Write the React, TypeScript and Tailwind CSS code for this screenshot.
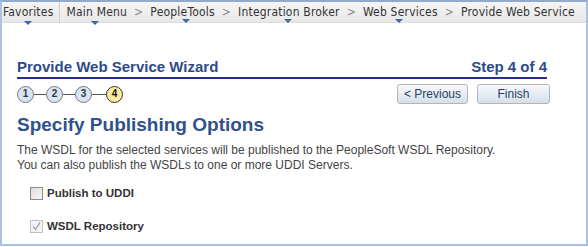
import React from "react";

function Crumb({ label, tri, triLeft }: { label: string; tri?: boolean; triLeft?: string }) {
  return (
    <span className="relative">
      {label}
      {tri && (
        <span
          className={`absolute top-[16px] w-0 h-0 border-l-[4px] border-r-[4px] border-t-[4px] border-l-transparent border-r-transparent border-t-[#3a67b0] ${triLeft ?? "left-1/2 -translate-x-1/2"}`}
        />
      )}
    </span>
  );
}

function Step({ n, active }: { n: number; active?: boolean }) {
  return (
    <div
      className={`w-[17px] h-[17px] rounded-full flex items-center justify-center text-[10px] font-bold leading-none ${
        active ? "bg-[#fde9a0] border-[1.5px] border-[#333] text-[#111]" : "bg-[#d8e4f6] border border-[#7a7a7a] text-[#333]"
      }`}
    >
      {n}
    </div>
  );
}

export default function App() {
  return (
    <div className="w-[588px] h-[247px] bg-white overflow-hidden" style={{ fontFamily: "Arial, 'Liberation Sans', sans-serif" }}>
      <div className="w-[588px] h-[246px] overflow-hidden border-l-[2px] border-r-[2px] border-b-[2px] border-t-[2px] border-l-[#a9c1e3] border-r-[#a9c1e3] border-b-[#a9c1e3] border-t-[#94a9c9] flex flex-col">
        <div
          className="h-[21px] shrink-0 bg-gradient-to-b from-[#f5f5f5] to-[#e8e8e8] border-b border-[#dcdcdc] flex items-center text-[12px] tracking-[0.2px] text-[#333] whitespace-nowrap"
          style={{ fontFamily: "'DejaVu Sans Condensed', 'DejaVu Sans', sans-serif" }}
        >
          <span className="pl-[1px] pr-[6px]">
            <Crumb label="Favorites" tri />
          </span>
          <span className="h-[21px] border-l border-[#cfcfcf]" />
          <span className="pl-[6px]">
            <Crumb label="Main Menu" tri triLeft="left-[25px]" />
          </span>
          <span className="px-[7px] text-[#888]">&gt;</span>
          <Crumb label="PeopleTools" tri triLeft="left-[32px]" />
          <span className="px-[7px] text-[#888]">&gt;</span>
          <Crumb label="Integration Broker" tri triLeft="left-[46px]" />
          <span className="px-[7px] text-[#888]">&gt;</span>
          <Crumb label="Web Services" tri triLeft="left-[32px]" />
          <span className="px-[7px] text-[#888]">&gt;</span>
          <Crumb label="Provide Web Service" />
        </div>

        <div className="pl-[15px] pr-[39px] flex flex-col">
          <div className="mt-[35px] flex justify-between items-end border-b-[2px] border-[#26308a] pb-[1px] text-[15px] leading-[18px] font-bold text-[#2e4b87]">
            <span>Provide Web Service Wizard</span>
            <span>Step 4 of 4</span>
          </div>

          <div className="mt-[5px] h-[20px] flex justify-between items-center -mr-[3px]">
            <div className="flex items-center">
              <Step n={1} />
              <div className="w-[12px] h-px bg-[#555]" />
              <Step n={2} />
              <div className="w-[12px] h-px bg-[#555]" />
              <Step n={3} />
              <div className="w-[14px] h-px bg-[#555]" />
              <Step n={4} active />
            </div>
            <div className="flex gap-[9px]">
              <button className="w-[71px] h-[20px] rounded-[3px] border border-[#b5b5b5] bg-gradient-to-b from-[#f7f9fc] to-[#d6dfea] text-[12px] leading-none text-[#2b3e66]">
                &lt; Previous
              </button>
              <button className="w-[73px] h-[20px] rounded-[3px] border border-[#b5b5b5] bg-gradient-to-b from-[#f7f9fc] to-[#d6dfea] text-[12px] leading-none text-[#2b3e66]">
                Finish
              </button>
            </div>
          </div>

          <div className="mt-[9px] text-[19px] font-bold text-[#30518a] leading-[24px] whitespace-nowrap">Specify Publishing Options</div>

          <div className="mt-[6px] text-[12px] text-[#444] leading-[15px] whitespace-nowrap">
            <div>The WSDL for the selected services will be published to the PeopleSoft WSDL Repository.</div>
            <div>You can also publish the WSDLs to one or more UDDI Servers.</div>
          </div>

          <div className="mt-[13px] ml-[13px] h-[14px] flex items-center gap-[4px] text-[11.5px] leading-[14px] font-bold text-[#333]">
            <span className="w-[13px] h-[13px] border border-[#8a8a8a] bg-gradient-to-br from-[#dcdcdc] to-[#f8f8f8]" />
            <span>Publish to UDDI</span>
          </div>

          <div className="mt-[19px] ml-[13px] h-[14px] flex items-center gap-[4px] text-[11.5px] leading-[14px] font-bold text-[#333]">
            <span className="w-[13px] h-[13px] border border-[#c0c0c0] bg-[#f4f4f4] flex items-center justify-center">
              <svg width="11" height="11" viewBox="0 0 11 11">
                <path d="M2 5.5 L4.5 8.5 L9 1.5" fill="none" stroke="#a8a8a8" strokeWidth="1.4" />
              </svg>
            </span>
            <span>WSDL Repository</span>
          </div>
        </div>
      </div>
    </div>
  );
}
